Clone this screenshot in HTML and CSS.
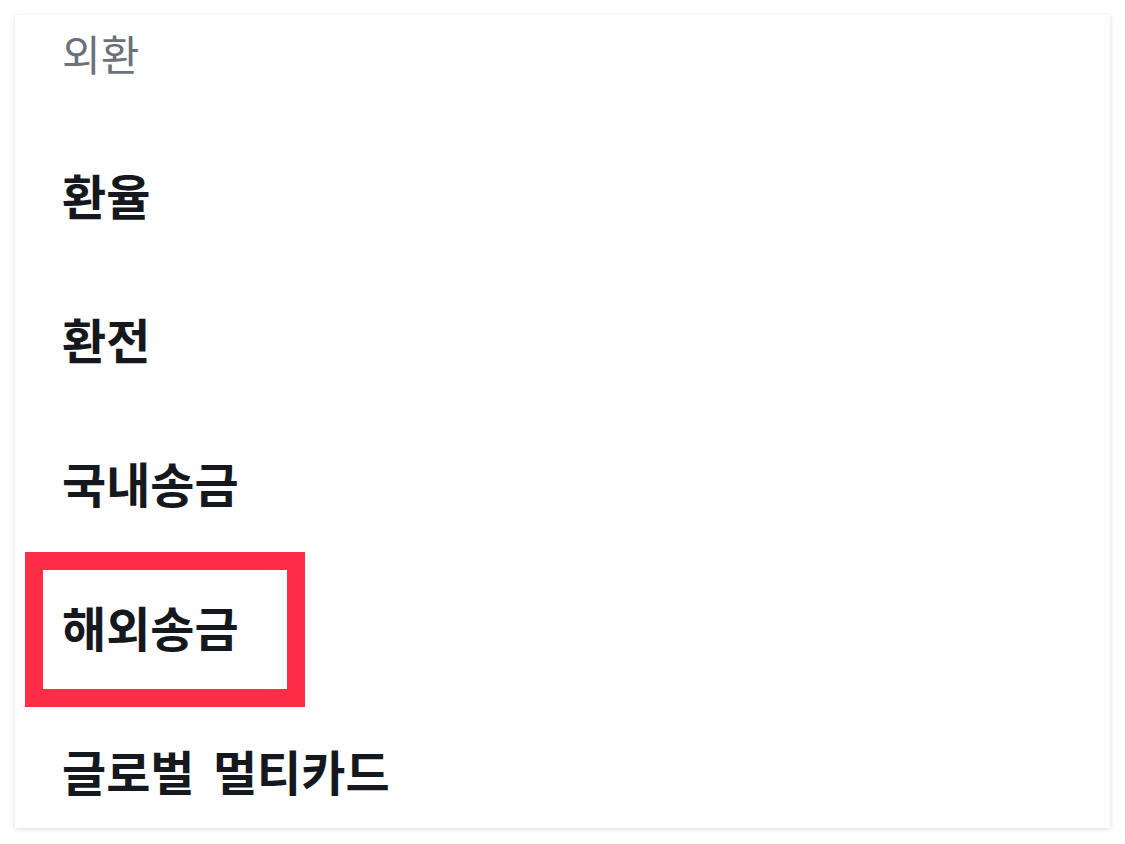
FILE: index.html
```html
<!DOCTYPE html>
<html lang="ko">
<head>
<meta charset="utf-8">
<link rel="stylesheet" href="styles.css">
</head>
<body>
<div class="card">
  <div class="header">외환</div>
  <ul class="menu">
    <li class="item">환율</li>
    <li class="item">환전</li>
    <li class="item">국내송금</li>
    <li class="item highlighted">해외송금<span class="mark"></span></li>
    <li class="item">글로벌 멀티카드</li>
  </ul>
</div>
</body>
</html>
```
FILE: styles.css
```css
* { box-sizing: border-box; }
html, body { margin: 0; padding: 0; background: #ffffff; }
body {
  width: 1125px;
  height: 844px;
  padding: 15px 15px 0 15px;
  font-family: "Noto Sans CJK KR", "Noto Sans", sans-serif;
  overflow: hidden;
}
.card {
  position: relative;
  width: 1095px;
  height: 813px;
  background: #fff;
  box-shadow: 0 1px 5px rgba(0,0,0,0.14);
  padding-left: 47px;
  overflow: hidden;
}
.header {
  height: 76px;
  line-height: 76px;
  font-size: 42px;
  font-weight: 400;
  color: #6b7079;
}
.menu {
  list-style: none;
  margin: 31px 0 0 0;
  padding: 0;
}
.item {
  position: relative;
  height: 144px;
  display: flex;
  align-items: center;
  font-size: 48px;
  font-weight: 700;
  word-spacing: 5px;
  color: #15181d;
}
.mark {
  position: absolute;
  left: -37px;
  top: -2px;
  width: 280px;
  height: 155px;
  border: 18px solid #ff2d46;
}
```
